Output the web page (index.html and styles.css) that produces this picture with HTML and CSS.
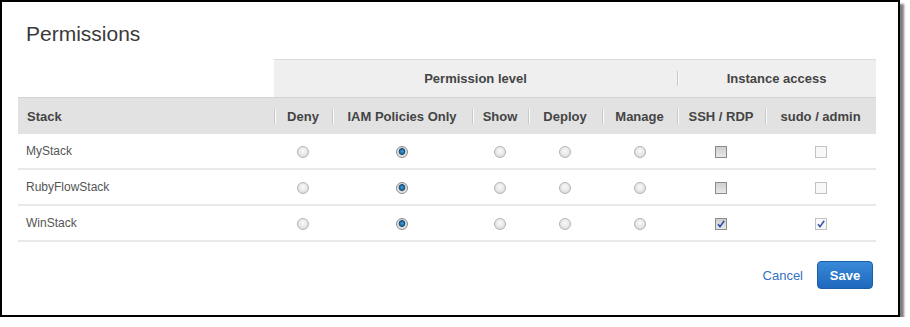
FILE: index.html
```html
<!DOCTYPE html>
<html lang="en">
  <head>
    <meta charset="UTF-8" />
    <title>Permissions</title>
    <link rel="stylesheet" href="styles.css">
  </head>
  <body>
    <div class="dialog">
      <h2>Permissions</h2>

      <table class="perm-table">
        <colgroup>
          <col class="c-stack" />
          <col class="c-deny" />
          <col class="c-iam" />
          <col class="c-show" />
          <col class="c-deploy" />
          <col class="c-manage" />
          <col class="c-ssh" />
          <col class="c-sudo" />
        </colgroup>
        <thead>
          <tr class="group-row">
            <th class="blank"></th>
            <th colspan="5">Permission level</th>
            <th colspan="2" class="sep">Instance access</th>
          </tr>
          <tr class="head-row">
            <th class="name">Stack</th>
            <th class="sep">Deny</th>
            <th class="sep">IAM Policies Only</th>
            <th class="sep">Show</th>
            <th class="sep">Deploy</th>
            <th class="sep">Manage</th>
            <th class="sep">SSH / RDP</th>
            <th class="sep">sudo / admin</th>
          </tr>
        </thead>
        <tbody>
          <tr>
            <td class="name">MyStack</td>
            <td><span class="radio"></span></td>
            <td><span class="radio on"></span></td>
            <td><span class="radio"></span></td>
            <td><span class="radio"></span></td>
            <td><span class="radio"></span></td>
            <td><span class="check"></span></td>
            <td><span class="check off"></span></td>
          </tr>
          <tr>
            <td class="name">RubyFlowStack</td>
            <td><span class="radio"></span></td>
            <td><span class="radio on"></span></td>
            <td><span class="radio"></span></td>
            <td><span class="radio"></span></td>
            <td><span class="radio"></span></td>
            <td><span class="check"></span></td>
            <td><span class="check off"></span></td>
          </tr>
          <tr>
            <td class="name">WinStack</td>
            <td><span class="radio"></span></td>
            <td><span class="radio on"></span></td>
            <td><span class="radio"></span></td>
            <td><span class="radio"></span></td>
            <td><span class="radio"></span></td>
            <td>
              <span class="check">
                <svg width="10" height="10" viewBox="0 0 10 10"><path d="M2 5.2 L4 7.6 L8.2 1.8" fill="none" stroke="#2b4fa8" stroke-width="1.6" /></svg>
              </span>
            </td>
            <td>
              <span class="check off">
                <svg width="10" height="10" viewBox="0 0 10 10"><path d="M2 5.2 L4 7.6 L8.2 1.8" fill="none" stroke="#3a5aa8" stroke-width="1.6" /></svg>
              </span>
            </td>
          </tr>
        </tbody>
      </table>

      <div class="actions">
        <a href="#" class="cancel">Cancel</a>
        <button type="button" class="save">Save</button>
      </div>
    </div>
  </body>
</html>
```

FILE: styles.css
```css
body {
  margin: 0;
  background-color: white;
  font-family: "Liberation Sans", Arial, sans-serif;
}
.dialog {
  width: 900px;
  height: 317px;
  box-sizing: border-box;
  border: 2px solid #000;
  box-shadow: 4px 4px 2px rgba(0, 0, 0, 0.5);
  padding: 0 22px 0 16px;
  background-color: white;
}
.dialog h2 {
  margin: 20px 0 13px 8px;
  font-size: 21px;
  font-weight: normal;
  line-height: 24px;
  color: #3a3a3a;
}
.perm-table {
  width: 858px;
  table-layout: fixed;
  border-collapse: separate;
  border-spacing: 0;
}
.c-stack { width: 256px; }
.c-deny { width: 58px; }
.c-iam { width: 140px; }
.c-show { width: 56px; }
.c-deploy { width: 74px; }
.c-manage { width: 75px; }
.c-ssh { width: 88px; }
.c-sudo { width: 111px; }

.perm-table th {
  padding: 0;
  font-size: 13px;
  font-weight: bold;
  color: #444;
  text-align: center;
}
.group-row th {
  height: 37px;
  border-top: 1px solid #dcdcdc;
  background-color: #efefef;
}
.group-row th.blank {
  border-top: none;
  background: none;
}
.head-row th {
  height: 36px;
  border-top: 1px solid #d2d2d2;
  background-color: #e2e2e2;
}
.perm-table th.sep {
  background-image: linear-gradient(#c9c9c9, #c9c9c9), linear-gradient(#fafafa, #fafafa);
  background-repeat: no-repeat;
  background-size: 1px 15px, 1px 15px;
  background-position: 0 50%, 1px 50%;
}
.perm-table th.name {
  text-align: left;
  padding-left: 9px;
}
.perm-table td {
  height: 34px;
  padding: 0;
  border-bottom: 2px solid #e9e9e9;
  text-align: center;
  font-size: 12px;
  color: #555;
}
.perm-table td.name {
  text-align: left;
  padding-left: 8px;
}

.radio {
  display: inline-block;
  width: 10px;
  height: 10px;
  border: 1px solid #b4b4b4;
  border-radius: 50%;
  background: radial-gradient(circle at 50% 40%, #fafafa 0%, #e6e6e6 55%, #cfcfcf 100%);
  vertical-align: middle;
}
.radio.on {
  border-color: #8a8a8a;
  background: radial-gradient(circle at 50% 45%, #5aa7d8 0px, #1b6aa0 2px, #0f4a78 3px, #cfcfcf 3.6px, #e8e8e8 5px);
}
.check {
  display: inline-flex;
  align-items: center;
  justify-content: center;
  width: 10px;
  height: 10px;
  border: 1px solid #8c8c8c;
  background: linear-gradient(#cfcfcf, #e8e8e8);
  vertical-align: middle;
}
.check.off {
  border-color: #c2c2c2;
  background: #f8f8f8;
}

.actions {
  display: flex;
  justify-content: flex-end;
  align-items: center;
  gap: 14px;
  margin-top: 19px;
  padding-right: 3px;
}
.actions .cancel {
  font-size: 13px;
  color: #3572c0;
  text-decoration: none;
}
.actions .save {
  width: 56px;
  height: 28px;
  padding: 0;
  border: 1px solid #1b5ea8;
  border-radius: 4px;
  background: linear-gradient(#3a89d8, #1e68bd);
  color: white;
  font-family: "Liberation Sans", Arial, sans-serif;
  font-size: 13px;
  font-weight: bold;
  cursor: pointer;
}
```
